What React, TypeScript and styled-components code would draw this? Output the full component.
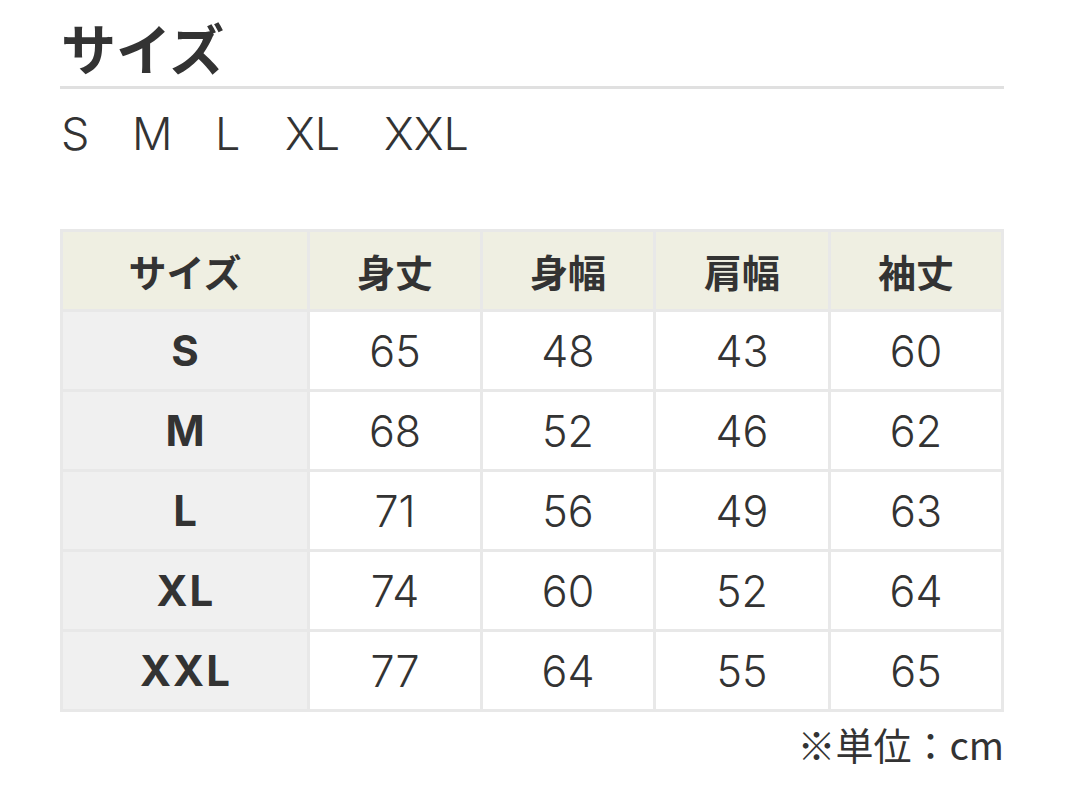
import React from "react";
import styled, { createGlobalStyle } from "styled-components";

const Global = createGlobalStyle`
  html, body { margin: 0; padding: 0; background: #ffffff; }
  body {
    font-family: Inter, "Noto Sans CJK JP", sans-serif;
    color: #333333;
  }
`;

const Page = styled.div`
  width: 944px;
  padding: 0 0 0 60px;
`;

const Title = styled.h2`
  margin: 0;
  padding: 14px 0 8px 1px;
  font-family: "Noto Sans CJK JP", sans-serif;
  font-weight: 700;
  font-size: 55px;
  line-height: 64px;
  border-bottom: 3px solid #e0e0e0;
`;

const SizeList = styled.ul`
  list-style: none;
  margin: 0;
  padding: 20px 0 0 1px;
  display: flex;
  font-family: Inter, sans-serif;
  font-size: 45px;
  line-height: 50px;
  font-weight: 300;
`;

const SizeItem = styled.li<{ $w: number }>`
  width: ${(p) => p.$w}px;
`;

const Table = styled.table`
  margin-top: 70px;
  width: 944px;
  table-layout: fixed;
  border-collapse: separate;
  border-spacing: 3px;
  background: #e8e8e8;
`;

const HeadCell = styled.th`
  background: #efefe2;
  height: 77px;
  padding: 0;
  font-family: "Noto Sans CJK JP", sans-serif;
  font-weight: 700;
  font-size: 38px;
  text-align: center;
  vertical-align: middle;
  color: #333333;
`;

const RowHead = styled.th`
  background: #f0f0f0;
  height: 77px;
  padding: 0 0 0 2px;
  font-family: Inter, sans-serif;
  font-weight: 700;
  font-size: 42px;
  letter-spacing: 2px;
  text-align: center;
  vertical-align: middle;
  color: #333333;
`;

const Cell = styled.td`
  background: #ffffff;
  height: 77px;
  padding: 0;
  font-family: Inter, sans-serif;
  font-weight: 300;
  font-size: 43px;
  text-align: center;
  vertical-align: middle;
  color: #333333;
`;

const Note = styled.p`
  margin: 8px 0 0;
  text-align: right;
  font-family: "Noto Sans CJK JP", sans-serif;
  font-weight: 400;
  font-size: 38px;
  line-height: 48px;
`;

const sizes: { label: string; w: number }[] = [
  { label: "S", w: 71 },
  { label: "M", w: 83 },
  { label: "L", w: 70 },
  { label: "XL", w: 99 },
  { label: "XXL", w: 100 },
];

const headers = ["サイズ", "身丈", "身幅", "肩幅", "袖丈"];
const colWidths = [244, 170, 170, 172, 170];

const rows: [string, number, number, number, number][] = [
  ["S", 65, 48, 43, 60],
  ["M", 68, 52, 46, 62],
  ["L", 71, 56, 49, 63],
  ["XL", 74, 60, 52, 64],
  ["XXL", 77, 64, 55, 65],
];

export default function App() {
  return (
    <Page>
      <Global />
      <Title>サイズ</Title>
      <SizeList>
        {sizes.map((s) => (
          <SizeItem key={s.label} $w={s.w}>
            {s.label}
          </SizeItem>
        ))}
      </SizeList>
      <Table>
        <colgroup>
          {colWidths.map((w, i) => (
            <col key={i} style={{ width: w }} />
          ))}
        </colgroup>
        <thead>
          <tr>
            {headers.map((h) => (
              <HeadCell key={h}>{h}</HeadCell>
            ))}
          </tr>
        </thead>
        <tbody>
          {rows.map((r) => (
            <tr key={r[0]}>
              <RowHead>{r[0]}</RowHead>
              {r.slice(1).map((v, i) => (
                <Cell key={i}>{v}</Cell>
              ))}
            </tr>
          ))}
        </tbody>
      </Table>
      <Note>※単位：cm</Note>
    </Page>
  );
}
